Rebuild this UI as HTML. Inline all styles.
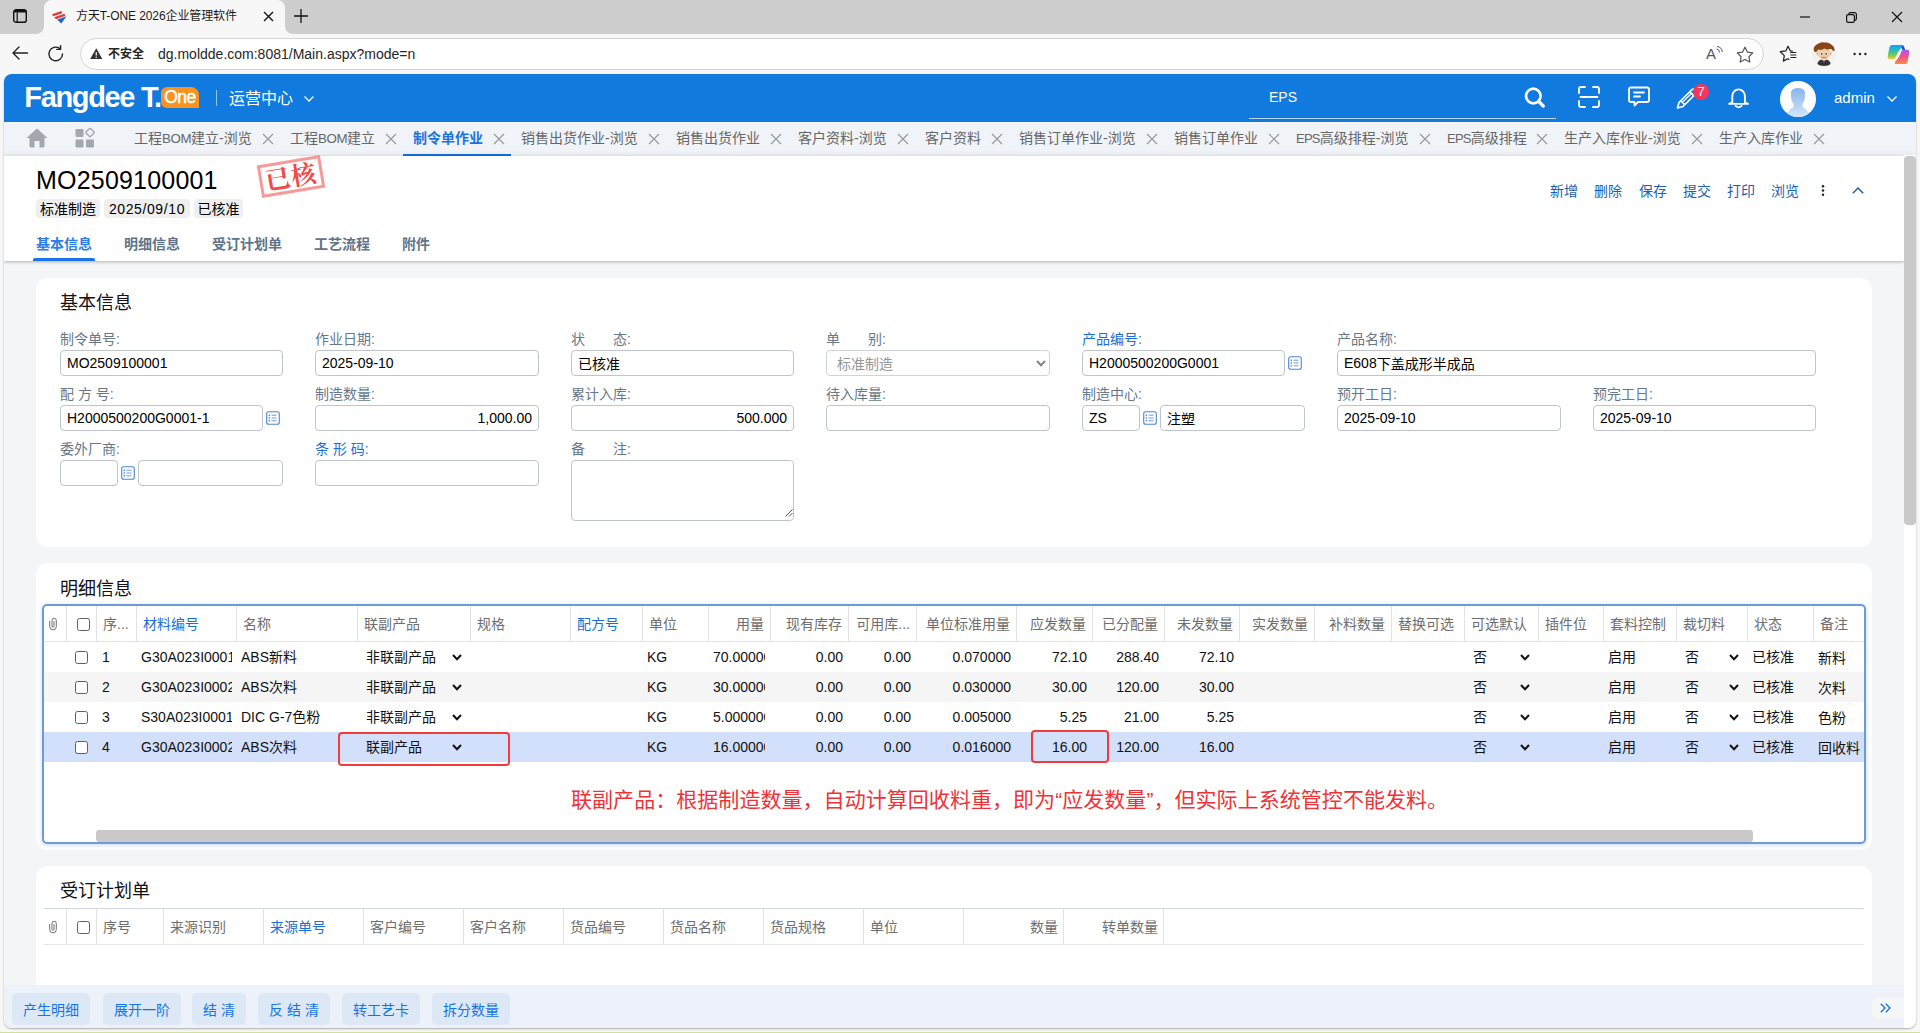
<!DOCTYPE html>
<html lang="zh-CN">
<head>
<meta charset="utf-8">
<title>方天T-ONE 2026企业管理软件</title>
<style>
*{box-sizing:border-box;margin:0;padding:0}
html,body{width:1920px;height:1033px;overflow:hidden;background:#f7f7f7}
body{font-family:"Liberation Sans","Noto Sans CJK SC",sans-serif;font-size:14px;color:#000;position:relative}
.abs{position:absolute}
svg{display:block;position:absolute;overflow:visible}
.nw{white-space:nowrap}
/* browser chrome */
#tabstrip{left:0;top:0;width:1920px;height:34px;background:#cdcdcd}
#acttab{left:44px;top:0;width:240.5px;height:34px;background:#f7f7f7;border-radius:8px 8px 0 0}
#acttab:before,#acttab:after{content:"";position:absolute;bottom:0;width:8px;height:8px}
#acttab:before{left:-8px;background:radial-gradient(circle at 0 0,rgba(247,247,247,0) 7.5px,#f7f7f7 8.5px)}
#acttab:after{right:-8px;background:radial-gradient(circle at 100% 0,rgba(247,247,247,0) 7.5px,#f7f7f7 8.5px)}
#tabtitle{left:76px;top:7px;font-size:12px;line-height:18px;color:#1b1b1b;letter-spacing:-0.1px}
#addr{left:0;top:34px;width:1920px;height:40px;background:#f7f7f7}
#pill{left:80px;top:38px;width:1684px;height:32px;background:#fff;border:1px solid #d4d4d4;border-radius:16px}
#unsafe{left:108px;top:45px;font-size:12px;line-height:18px;font-weight:bold;color:#262626}
#url{left:158px;top:44px;font-size:14px;line-height:20px;color:#262626}
#greenline{left:0;top:1032px;width:1920px;height:1px;background:#cfdf9c}
/* page */
#page{left:4px;top:74px;width:1912px;height:954px;background:#f4f5f7;border-radius:8px;overflow:hidden;box-shadow:0 1px 2px rgba(0,0,0,.3)}
#hdr{left:0;top:0;width:1912px;height:48px;background:#107ade}
#logo{left:20.300px;top:7px;font-size:29px;line-height:32px;font-weight:bold;color:#fff;letter-spacing:-1.340px}
#one{left:157px;top:13px;width:38px;height:21px;background:#f7931e;border-radius:6px 8px 0 6px;color:#fff;font-size:17.500px;line-height:21px;text-align:center;letter-spacing:-0.500px;-webkit-text-stroke:0.450px #fff}
#sep{left:212px;top:16px;width:1px;height:16px;background:rgba(255,255,255,.55)}
#center{left:225px;top:14px;font-size:16px;line-height:22px;color:#fff}
#eps{left:1265px;top:13px;font-size:14px;line-height:20px;color:#fff}
#sline{left:1245px;top:44px;width:307px;height:1px;background:rgba(255,255,255,.7)}
#badge{left:1689px;top:10px;width:16px;height:16px;border-radius:8px;background:#f5365c;color:#fff;font-size:13px;line-height:16px;text-align:center}
#avatar{left:1776px;top:7px;width:36px;height:36px;border-radius:18px;background:#fff;overflow:hidden}
#admin{left:1830px;top:13px;font-size:15px;line-height:22px;color:#fff}
#tabs{left:0;top:48px;width:1912px;height:34px;background:linear-gradient(#f0f3f7 0,#f0f3f7 28px,#e9ecef 34px)}
.tab{position:absolute;top:54px;font-size:14px;line-height:20px;color:#666;white-space:nowrap}
.tab.on{color:#1a73e0;font-weight:bold}
#tabline{left:399px;top:80px;width:108px;height:2px;background:#0f6fde}

#dochead{left:0;top:82px;width:1900px;height:105px;background:#fff;box-shadow:0 1px 3px rgba(0,0,0,.28)}
#docno{left:32px;top:90px;font-size:25px;line-height:32px;color:#000;letter-spacing:0.2px}
.tag{position:absolute;top:125px;height:19px;background:#efefef;border-radius:4px;font-size:14px;line-height:20px;text-align:center;color:#000;white-space:nowrap}
#stamp{left:255px;top:86px;width:64px;height:33px;border:3px solid rgba(243,70,70,.62);color:#f03030;font-family:"Noto Serif CJK SC","Liberation Serif",serif;font-weight:700;font-size:25px;line-height:24px;text-align:center;transform:rotate(-9.5deg);letter-spacing:1px;opacity:.88}
.act{position:absolute;top:107px;font-size:14px;line-height:20px;color:#1b5fae;white-space:nowrap}
.stab{position:absolute;top:160px;font-size:14px;line-height:20px;font-weight:bold;color:#5f7389;white-space:nowrap}
.stab.on{color:#2b7de9}
#stabline{left:29px;top:184px;width:62px;height:3px;background:#1a73e8;border-radius:2px 2px 0 0}
#vscroll{left:1900px;top:81px;width:12px;height:873px;background:#fff}
#vthumb{left:0;top:1px;width:12px;height:369px;background:#c9c9c9;border-radius:4px}
.card{position:absolute;left:32px;width:1836px;background:#fff;border-radius:12px}
.ctitle{position:absolute;left:56px;font-size:18px;line-height:24px;color:#111;white-space:nowrap}
.lbl{position:absolute;font-size:14px;line-height:16px;color:#66788a;white-space:nowrap}
.lbl.b{color:#1a6fd6}
.inp{position:absolute;height:26px;border:1px solid #c0c4cc;border-radius:4px;background:#fff;font-size:14px;line-height:24px;padding:0 6px;color:#000;white-space:nowrap;overflow:hidden}
.inp.r{text-align:right}
.inp.dis{color:#969696;padding-left:10px;border-color:#cfd3da}
.inp i{font-style:normal;position:relative;top:1px}

#grid{left:38px;top:530px;width:1824px;height:240px;border:2px solid #6e9ad8;border-radius:5px;background:#fff;box-shadow:0 1px 5px rgba(90,140,230,.35)}
.gh{position:absolute;font-size:14px;line-height:20px;color:#6e6e6e;white-space:nowrap;overflow:hidden}
.gh.b{color:#1a6fd6}
.gh.r{text-align:right}
.vs{position:absolute;width:1px;background:#e3e3e3}
.hl{position:absolute;height:1px;background:#e3e3e3}
.row{position:absolute;left:40px;width:1820px;height:30px}
.gc{position:absolute;font-size:14px;line-height:20px;color:#111;white-space:nowrap;overflow:hidden}
.gc.r{text-align:right}
.cb{position:absolute;width:13px;height:13px;border:1px solid #5f5f5f;border-radius:2.5px;background:#fff}
.rbox{position:absolute;border:2px solid #f23b3b;border-radius:4px}
#note{left:567px;top:712px;font-size:21px;line-height:28px;color:#ee3338;white-space:nowrap;letter-spacing:0.05px}
#hsb{left:92px;top:756px;width:1657px;height:12px;background:#c9c9c9;border-radius:3px}
#foot{left:0;top:911px;width:1900px;height:43px;background:#edf1f9}
.btn{position:absolute;top:919px;height:32px;background:#dce8f6;border-radius:5px;color:#1673e6;font-size:14px;line-height:34px;text-align:center;white-space:nowrap}
#more{left:1868px;top:924px;width:32px;height:20px;background:#f5f6f8;border-radius:5px 0 0 5px}
</style>
</head>
<body>

<div id="tabstrip" class="abs"></div>
<div id="acttab" class="abs"></div>
<svg style="left:13px;top:9px" width="14" height="14" viewBox="0 0 14 14"><rect x="0.700" y="0.700" width="12.600" height="12.600" rx="2.400" fill="none" stroke="#111" stroke-width="1.400"/><path d="M0.700 3.200Q0.700 0.700 3.200 0.700H10.800Q13.300 0.700 13.300 3.200V3.600H0.700Z" fill="#111"/><path d="M4.200 3.600V13.300" stroke="#111" stroke-width="1.200"/></svg>
<svg style="left:51px;top:9.500px" width="16.500" height="14.500" viewBox="0 0 16 14"><path d="M1 4L10 1L11 3L2 6Z" fill="#e03a3a"/><path d="M3 7L13 3.5L14 5.5L5 9Z" fill="#e03a3a"/><path d="M6 9.5L15 6L10 13Z" fill="#1c64c8"/></svg>
<div id="tabtitle" class="abs nw">方天T-ONE 2026企业管理软件</div>
<svg style="left:263.5px;top:11.5px" width="9.0" height="9.0" viewBox="0 0 9.0 9.0"><path d="M0 0L9.0 9.0M9.0 0L0 9.0" stroke="#111" stroke-width="1.4" fill="none"/></svg>
<svg style="left:294px;top:9px" width="14" height="14" viewBox="0 0 14 14"><path d="M7 0V14M0 7H14" stroke="#111" stroke-width="1.3"/></svg>
<svg style="left:1800px;top:16px" width="10" height="2" viewBox="0 0 10 2"><path d="M0 1H10" stroke="#111" stroke-width="1.2"/></svg>
<svg style="left:1846px;top:12px" width="11" height="11" viewBox="0 0 11 11"><rect x="0.6" y="2.6" width="7.8" height="7.8" rx="1.6" fill="none" stroke="#111" stroke-width="1.2"/><path d="M2.8 2.4V2.2A1.6 1.6 0 0 1 4.4 0.6H8.4A2 2 0 0 1 10.4 2.6V6.6A1.6 1.6 0 0 1 8.8 8.2H8.6" fill="none" stroke="#111" stroke-width="1.2"/></svg>
<svg style="left:1892px;top:12px" width="10" height="10" viewBox="0 0 10 10"><path d="M0 0L10 10M10 0L0 10" stroke="#111" stroke-width="1.2" fill="none"/></svg>
<div id="addr" class="abs"></div>
<svg style="left:12px;top:46px" width="16" height="14" viewBox="0 0 16 14"><path d="M7 1L1 7L7 13M1 7H15.5" fill="none" stroke="#222" stroke-width="1.4" stroke-linecap="round" stroke-linejoin="round"/></svg>
<svg style="left:47px;top:45px" width="18" height="18" viewBox="0 0 18 18"><path d="M15.5 9A6.8 6.8 0 1 1 12.6 3.4" fill="none" stroke="#222" stroke-width="1.4" stroke-linecap="round"/><path d="M9.2 3.6H13V-0.2" transform="translate(0.6,0.8)" fill="none" stroke="#222" stroke-width="1.4" stroke-linecap="round" stroke-linejoin="round"/></svg>
<div id="pill" class="abs"></div>
<svg style="left:90px;top:47.500px" width="12.500" height="11.500" viewBox="0 0 12 11"><path d="M6 0.3L11.8 10.6H0.2Z" fill="#333"/><path d="M6 4V7.2" stroke="#fff" stroke-width="1.2"/><circle cx="6" cy="8.8" r="0.7" fill="#fff"/></svg>
<div id="unsafe" class="abs nw">不安全</div>
<div id="url" class="abs nw">dg.moldde.com:8081/Main.aspx?mode=n</div>
<div class="abs nw" style="left:1706px;top:45px;font-size:15px;line-height:18px;color:#555">A</div>
<svg style="left:1716px;top:46px" width="7" height="9" viewBox="0 0 7 9"><path d="M0.5 3A3.5 3.5 0 0 1 3.5 6.5M1 0.5A6 6 0 0 1 6.3 6" fill="none" stroke="#555" stroke-width="1"/></svg>
<svg style="left:1736px;top:46px" width="18" height="17" viewBox="0 0 18 17"><path d="M9 1.2L11.4 6.1L16.8 6.9L12.9 10.7L13.8 16L9 13.5L4.2 16L5.1 10.7L1.2 6.9L6.6 6.1Z" fill="none" stroke="#555" stroke-width="1.2" stroke-linejoin="round"/></svg>
<svg style="left:1779px;top:45px" width="19" height="18" viewBox="0 0 19 18"><path d="M9 1.300L11.200 5.800L13.300 6.100M9 1.300L6.800 5.900L1.300 6.700L5.300 10.600L4.400 16.100L8.700 13.800L9.900 14.400" fill="none" stroke="#222" stroke-width="1.250" stroke-linejoin="round" stroke-linecap="round"/><path d="M11.300 7.500H17.300M11.300 10H17.300M11.300 12.500H17.300" stroke="#222" stroke-width="1.200"/></svg>
<svg style="left:1812px;top:42px;overflow:hidden;border-radius:12px" width="24" height="24" viewBox="0 0 24 24"><circle cx="12" cy="12" r="12" fill="#f1f2ef"/><path d="M5 24Q5.500 18.200 9.500 17.600L12 19L14.500 17.600Q18.500 18.200 19 24Z" fill="#34353a"/><path d="M11.300 18.600L12 21L12.700 18.600Z" fill="#e4573d"/><ellipse cx="5.600" cy="11.600" rx="1.300" ry="1.800" fill="#e9b48c"/><ellipse cx="18.400" cy="11.600" rx="1.300" ry="1.800" fill="#e9b48c"/><ellipse cx="12" cy="11.400" rx="5.900" ry="6.400" fill="#f3c9a4"/><path d="M1.800 8.600Q0.800 3.200 6 1.600Q9 -0.800 12.200 0.600Q16.500 -0.800 19.800 2.200Q23.600 4.800 22.200 9.400Q20.400 8.600 19 6.800Q15.500 8.400 12.400 6.600Q9.600 8.600 6.400 7.600Q5.200 9.600 3.400 10.200Q2.300 9.800 1.800 8.600Z" fill="#8a4418"/><ellipse cx="9.600" cy="11.600" rx="1.300" ry="1.700" fill="#fff"/><ellipse cx="14.400" cy="11.600" rx="1.300" ry="1.700" fill="#fff"/><circle cx="9.700" cy="11.800" r="0.850" fill="#222"/><circle cx="14.300" cy="11.800" r="0.850" fill="#222"/><path d="M9.800 15Q12 16.600 14.200 15" stroke="#9c4a32" stroke-width="0.700" fill="none"/></svg>
<svg style="left:1853px;top:52px" width="14" height="4" viewBox="0 0 14 4"><circle cx="1.6" cy="2" r="1.2" fill="#222"/><circle cx="7" cy="2" r="1.2" fill="#222"/><circle cx="12.4" cy="2" r="1.2" fill="#222"/></svg>
<svg style="left:1886.500px;top:43.500px" width="23" height="21" viewBox="0 0 24 21.500"><defs><linearGradient id="cp1" x1="0" y1="0" x2="0" y2="1"><stop offset="0" stop-color="#1e9af2"/><stop offset=".35" stop-color="#27b8c8"/><stop offset=".6" stop-color="#55c96a"/><stop offset="1" stop-color="#f6c72e"/></linearGradient><linearGradient id="cp2" x1="0" y1="0" x2="0" y2="1"><stop offset="0" stop-color="#a65be8"/><stop offset=".45" stop-color="#ee4f93"/><stop offset="1" stop-color="#fb8b3a"/></linearGradient></defs><path d="M12.500 0.800H15.200Q17.400 0.800 18 2.800L19 6H16.200L14.600 3Z" fill="#1b55d6"/><path d="M4.600 0.800H14Q16.600 0.800 15.600 3L11.600 8.200L8.700 14.300Q8 15.700 6.400 15.700H3.200Q0 15.700 0.800 12.100L2.600 3.500Q3.200 0.800 4.600 0.800Z" fill="url(#cp1)"/><path d="M19.400 20.700H10Q7.400 20.700 8.400 18.500L12.400 13.300L15.300 7.200Q16 5.800 17.600 5.800H20.800Q24 5.800 23.200 9.400L21.400 18Q20.800 20.700 19.400 20.700Z" fill="url(#cp2)"/></svg>
<div id="greenline" class="abs"></div>

<div id="page" class="abs">

<div id="hdr" class="abs"></div>
<div id="logo" class="abs nw">Fangdee T.</div>
<div id="one" class="abs nw">One</div>
<div id="sep" class="abs"></div>
<div id="center" class="abs nw">运营中心</div>
<svg style="left:300px;top:22px" width="10" height="6" viewBox="0 0 10 6"><path d="M0.5 0.5L5 5L9.5 0.5" fill="none" stroke="#fff" stroke-width="1.3"/></svg>
<div id="eps" class="abs nw">EPS</div>
<div id="sline" class="abs"></div>
<svg style="left:1520px;top:13px" width="22" height="22" viewBox="0 0 22 22"><circle cx="9.300" cy="9" r="7.300" fill="none" stroke="#fff" stroke-width="2.700"/><path d="M14.800 14.500L19.300 19" stroke="#fff" stroke-width="3.200" stroke-linecap="round"/></svg>
<svg style="left:1574px;top:12px" width="22" height="22" viewBox="0 0 22 22"><path d="M1 7V3Q1 1 3 1H7M15 1H19Q21 1 21 3V7M21 15V19Q21 21 19 21H15M7 21H3Q1 21 1 19V15M2.500 11H19.500" fill="none" stroke="#fff" stroke-width="1.8" stroke-linecap="round"/></svg>
<svg style="left:1624px;top:12px" width="22" height="22" viewBox="0 0 22 22"><path d="M3 1.5H19Q21 1.5 21 3.5V14Q21 16 19 16H10L6.5 19.5V16H3Q1 16 1 14V3.5Q1 1.5 3 1.5Z" fill="none" stroke="#fff" stroke-width="1.8" stroke-linejoin="round"/><path d="M6 6.5H16M6 10.5H12" stroke="#fff" stroke-width="1.8" stroke-linecap="round"/></svg>
<svg style="left:1672px;top:12px" width="24" height="24" viewBox="0 0 24 24"><path d="M3 16.5L15.5 4Q17.5 2 19.5 4Q21.5 6 19.5 8L7 20.5L1.5 22Z M5 15L8.8 18.8 M13.8 5.8L17.7 9.7" fill="none" stroke="#fff" stroke-width="1.7" stroke-linejoin="round"/><path d="M6 16.8L16 6.8" stroke="#fff" stroke-width="1.3"/></svg>
<div id="badge" class="abs">7</div>
<svg style="left:1724px;top:11px" width="22" height="24" viewBox="0 0 22 24"><path d="M4.300 17.300V11A6.300 6.600 0 0 1 16.900 11V17.300L20 18.900H1.200Z" fill="none" stroke="#fff" stroke-width="1.900" stroke-linejoin="round"/><path d="M7.600 20.900Q10.600 23.800 13.600 20.900" fill="none" stroke="#fff" stroke-width="1.800" stroke-linecap="round"/></svg>
<div id="avatar" class="abs"><svg style="left:0;top:0" width="36" height="36" viewBox="0 0 36 36"><defs><linearGradient id="av" x1="0" y1="0" x2="0" y2="1"><stop offset="0" stop-color="#86b4ea"/><stop offset="1" stop-color="#d4e6f9"/></linearGradient></defs><path d="M11 14Q10 7 18 7Q26 7 25 14Q25 20 22.5 23V26Q28 28 29 36H7Q8 28 13.500 26V23Q11 20 11 14Z" fill="url(#av)"/></svg></div>
<div id="admin" class="abs nw">admin</div>
<svg style="left:1883px;top:22px" width="10" height="6" viewBox="0 0 10 6"><path d="M0.5 0.5L5 5L9.5 0.5" fill="none" stroke="#fff" stroke-width="1.3"/></svg>
<div id="tabs" class="abs"></div>
<svg style="left:22px;top:54px" width="22" height="20" viewBox="0 0 22 20"><path d="M11 0.5L21.5 10H18.500V18Q18.500 19.500 17 19.500H13.500V13H8.500V19.500H5Q3.500 19.500 3.500 18V10H0.500Z" fill="#a3a7ae"/></svg>
<svg style="left:71px;top:53px" width="22" height="21" viewBox="0 0 22 21"><rect x="0.5" y="2" width="8" height="8" rx="1.2" fill="#a3a7ae"/><rect x="0.5" y="12.500" width="8" height="8" rx="1.2" fill="#a3a7ae"/><rect x="11" y="12.500" width="8" height="8" rx="1.2" fill="#a3a7ae"/><rect x="11.800" y="2.300" width="6.400" height="6.400" rx="1" transform="rotate(45 15 5.500)" fill="none" stroke="#a3a7ae" stroke-width="1.400"/></svg>
<div class="tab" style="left:130px">工程<span style="font-size:13.300px;letter-spacing:-0.400px">BOM</span>建立-浏览</div><svg style="left:259px;top:59.5px" width="10" height="10" viewBox="0 0 10 10"><path d="M0 0L10 10M10 0L0 10" stroke="#999" stroke-width="1.2" fill="none"/></svg><div class="tab" style="left:286px">工程<span style="font-size:13.300px;letter-spacing:-0.400px">BOM</span>建立</div><svg style="left:382px;top:59.5px" width="10" height="10" viewBox="0 0 10 10"><path d="M0 0L10 10M10 0L0 10" stroke="#999" stroke-width="1.2" fill="none"/></svg><div class="tab on" style="left:409px">制令单作业</div><svg style="left:490px;top:59.5px" width="10" height="10" viewBox="0 0 10 10"><path d="M0 0L10 10M10 0L0 10" stroke="#999" stroke-width="1.2" fill="none"/></svg><div class="tab" style="left:517px">销售出货作业-浏览</div><svg style="left:645px;top:59.5px" width="10" height="10" viewBox="0 0 10 10"><path d="M0 0L10 10M10 0L0 10" stroke="#999" stroke-width="1.2" fill="none"/></svg><div class="tab" style="left:672px">销售出货作业</div><svg style="left:767px;top:59.5px" width="10" height="10" viewBox="0 0 10 10"><path d="M0 0L10 10M10 0L0 10" stroke="#999" stroke-width="1.2" fill="none"/></svg><div class="tab" style="left:794px">客户资料-浏览</div><svg style="left:894px;top:59.5px" width="10" height="10" viewBox="0 0 10 10"><path d="M0 0L10 10M10 0L0 10" stroke="#999" stroke-width="1.2" fill="none"/></svg><div class="tab" style="left:921px">客户资料</div><svg style="left:988px;top:59.5px" width="10" height="10" viewBox="0 0 10 10"><path d="M0 0L10 10M10 0L0 10" stroke="#999" stroke-width="1.2" fill="none"/></svg><div class="tab" style="left:1015px">销售订单作业-浏览</div><svg style="left:1143px;top:59.5px" width="10" height="10" viewBox="0 0 10 10"><path d="M0 0L10 10M10 0L0 10" stroke="#999" stroke-width="1.2" fill="none"/></svg><div class="tab" style="left:1170px">销售订单作业</div><svg style="left:1265px;top:59.5px" width="10" height="10" viewBox="0 0 10 10"><path d="M0 0L10 10M10 0L0 10" stroke="#999" stroke-width="1.2" fill="none"/></svg><div class="tab" style="left:1292px"><span style="font-size:13px;letter-spacing:-0.750px">EPS</span>高级排程-浏览</div><svg style="left:1416px;top:59.5px" width="10" height="10" viewBox="0 0 10 10"><path d="M0 0L10 10M10 0L0 10" stroke="#999" stroke-width="1.2" fill="none"/></svg><div class="tab" style="left:1443px"><span style="font-size:13px;letter-spacing:-0.750px">EPS</span>高级排程</div><svg style="left:1533px;top:59.5px" width="10" height="10" viewBox="0 0 10 10"><path d="M0 0L10 10M10 0L0 10" stroke="#999" stroke-width="1.2" fill="none"/></svg><div class="tab" style="left:1560px">生产入库作业-浏览</div><svg style="left:1688px;top:59.5px" width="10" height="10" viewBox="0 0 10 10"><path d="M0 0L10 10M10 0L0 10" stroke="#999" stroke-width="1.2" fill="none"/></svg><div class="tab" style="left:1715px">生产入库作业</div><svg style="left:1810px;top:59.5px" width="10" height="10" viewBox="0 0 10 10"><path d="M0 0L10 10M10 0L0 10" stroke="#999" stroke-width="1.2" fill="none"/></svg>
<div id="tabline" class="abs"></div>


<div class="card" style="top:204px;height:269px"></div>
<div class="ctitle" style="top:217px">基本信息</div>
<div class="lbl" style="left:56px;top:257px">制令单号:</div><div class="inp " style="left:56px;top:276px;width:223px;height:26px">MO2509100001</div><div class="lbl" style="left:311px;top:257px">作业日期:</div><div class="inp " style="left:311px;top:276px;width:224px;height:26px">2025-09-10</div><div class="lbl" style="left:567px;top:257px">状&emsp;&emsp;态:</div><div class="inp " style="left:567px;top:276px;width:223px;height:26px"><i>已核准</i></div><div class="lbl" style="left:822px;top:257px">单&emsp;&emsp;别:</div><div class="inp dis" style="left:822px;top:276px;width:224px;height:26px"><i>标准制造</i></div><svg style="left:1032px;top:286px" width="10" height="7" viewBox="0 0 10 7"><path d="M1 1L5 5.200L9 1" fill="none" stroke="#858585" stroke-width="2"/></svg><div class="lbl b" style="left:1078px;top:257px">产品编号:</div><div class="inp " style="left:1078px;top:276px;width:203px;height:26px">H2000500200G0001</div><svg style="left:1284px;top:282px" width="14" height="14" viewBox="0 0 14 14"><rect x="0.7" y="0.7" width="12.6" height="12.6" rx="2" fill="#fff" stroke="#4a86d8" stroke-width="1.1"/><path d="M3.300 3.500V10.500" stroke="#4a86d8" stroke-width="1.300" stroke-dasharray="1.400 1.400"/><path d="M5.500 4.200H10.500M5.500 7H10.500M5.500 9.800H10.500" stroke="#6b9be0" stroke-width="1"/></svg><div class="lbl" style="left:1333px;top:257px">产品名称:</div><div class="inp " style="left:1333px;top:276px;width:479px;height:26px">E608<i>下盖成形半成品</i></div><div class="lbl" style="left:56px;top:312px">配 方 号:</div><div class="inp " style="left:56px;top:331px;width:203px;height:26px">H2000500200G0001-1</div><svg style="left:262px;top:337px" width="14" height="14" viewBox="0 0 14 14"><rect x="0.7" y="0.7" width="12.6" height="12.6" rx="2" fill="#fff" stroke="#4a86d8" stroke-width="1.1"/><path d="M3.300 3.500V10.500" stroke="#4a86d8" stroke-width="1.300" stroke-dasharray="1.400 1.400"/><path d="M5.500 4.200H10.500M5.500 7H10.500M5.500 9.800H10.500" stroke="#6b9be0" stroke-width="1"/></svg><div class="lbl" style="left:311px;top:312px">制造数量:</div><div class="inp r" style="left:311px;top:331px;width:224px;height:26px">1,000.00</div><div class="lbl" style="left:567px;top:312px">累计入库:</div><div class="inp r" style="left:567px;top:331px;width:223px;height:26px">500.000</div><div class="lbl" style="left:822px;top:312px">待入库量:</div><div class="inp " style="left:822px;top:331px;width:224px;height:26px"></div><div class="lbl" style="left:1078px;top:312px">制造中心:</div><div class="inp " style="left:1078px;top:331px;width:58px;height:26px">ZS</div><svg style="left:1139px;top:337px" width="14" height="14" viewBox="0 0 14 14"><rect x="0.7" y="0.7" width="12.6" height="12.6" rx="2" fill="#fff" stroke="#4a86d8" stroke-width="1.1"/><path d="M3.300 3.500V10.500" stroke="#4a86d8" stroke-width="1.300" stroke-dasharray="1.400 1.400"/><path d="M5.500 4.200H10.500M5.500 7H10.500M5.500 9.800H10.500" stroke="#6b9be0" stroke-width="1"/></svg><div class="inp " style="left:1156px;top:331px;width:145px;height:26px"><i>注塑</i></div><div class="lbl" style="left:1333px;top:312px">预开工日:</div><div class="inp " style="left:1333px;top:331px;width:224px;height:26px">2025-09-10</div><div class="lbl" style="left:1589px;top:312px">预完工日:</div><div class="inp " style="left:1589px;top:331px;width:223px;height:26px">2025-09-10</div><div class="lbl" style="left:56px;top:367px">委外厂商:</div><div class="inp " style="left:56px;top:386px;width:58px;height:26px"></div><svg style="left:117px;top:392px" width="14" height="14" viewBox="0 0 14 14"><rect x="0.7" y="0.7" width="12.6" height="12.6" rx="2" fill="#fff" stroke="#4a86d8" stroke-width="1.1"/><path d="M3.300 3.500V10.500" stroke="#4a86d8" stroke-width="1.300" stroke-dasharray="1.400 1.400"/><path d="M5.500 4.200H10.500M5.500 7H10.500M5.500 9.800H10.500" stroke="#6b9be0" stroke-width="1"/></svg><div class="inp " style="left:134px;top:386px;width:145px;height:26px"></div><div class="lbl b" style="left:311px;top:367px">条 形 码:</div><div class="inp " style="left:311px;top:386px;width:224px;height:26px"></div><div class="lbl" style="left:567px;top:367px">备&emsp;&emsp;注:</div><div class="inp " style="left:567px;top:386px;width:223px;height:61px"></div><svg style="left:781px;top:435px" width="8" height="8" viewBox="0 0 8 8"><path d="M7.500 0.500L0.500 7.500M7.500 4L4 7.500" stroke="#555" stroke-width="1"/></svg>

<div class="card" style="top:489px;height:287px"></div><div class="ctitle" style="top:503px">明细信息</div><div id="grid" class="abs"></div><div class="row" style="top:598px;background:#f5f5f5"></div><div class="row" style="top:658px;background:#d3e0fc"></div><svg style="left:45px;top:543px" width="8" height="14" viewBox="0 0 8 14"><path d="M0.700 4.400V9.600A3.300 3.300 0 0 0 7.300 9.600V3.400A2.150 2.150 0 0 0 3 3.400V9.300A1 1 0 0 0 5 9.300V4.600" fill="none" stroke="#6a6a6a" stroke-width="0.950" stroke-linecap="round"/></svg><div class="vs" style="left:62px;top:532px;height:36px"></div><div class="cb" style="left:73px;top:544px"></div><div class="vs" style="left:92px;top:532px;height:36px"></div><div class="gh" style="left:99px;top:540px;width:28px">序...</div><div class="vs" style="left:132px;top:532px;height:36px"></div><div class="gh b" style="left:139px;top:540px;width:88px">材料编号</div><div class="vs" style="left:232px;top:532px;height:36px"></div><div class="gh" style="left:239px;top:540px;width:109px">名称</div><div class="vs" style="left:353px;top:532px;height:36px"></div><div class="gh" style="left:360px;top:540px;width:101px">联副产品</div><div class="vs" style="left:466px;top:532px;height:36px"></div><div class="gh" style="left:473px;top:540px;width:88px">规格</div><div class="vs" style="left:566px;top:532px;height:36px"></div><div class="gh b" style="left:573px;top:540px;width:60px">配方号</div><div class="vs" style="left:638px;top:532px;height:36px"></div><div class="gh" style="left:645px;top:540px;width:54px">单位</div><div class="vs" style="left:704px;top:532px;height:36px"></div><div class="gh r" style="left:711px;top:540px;width:49px">用量</div><div class="vs" style="left:766px;top:532px;height:36px"></div><div class="gh r" style="left:773px;top:540px;width:65px">现有库存</div><div class="vs" style="left:844px;top:532px;height:36px"></div><div class="gh r" style="left:851px;top:540px;width:55px">可用库...</div><div class="vs" style="left:912px;top:532px;height:36px"></div><div class="gh r" style="left:919px;top:540px;width:87px">单位标准用量</div><div class="vs" style="left:1012px;top:532px;height:36px"></div><div class="gh r" style="left:1019px;top:540px;width:63px">应发数量</div><div class="vs" style="left:1088px;top:532px;height:36px"></div><div class="gh r" style="left:1095px;top:540px;width:59px">已分配量</div><div class="vs" style="left:1160px;top:532px;height:36px"></div><div class="gh r" style="left:1167px;top:540px;width:62px">未发数量</div><div class="vs" style="left:1235px;top:532px;height:36px"></div><div class="gh r" style="left:1242px;top:540px;width:62px">实发数量</div><div class="vs" style="left:1310px;top:532px;height:36px"></div><div class="gh r" style="left:1317px;top:540px;width:64px">补料数量</div><div class="vs" style="left:1387px;top:532px;height:36px"></div><div class="gh" style="left:1394px;top:540px;width:61px">替换可选</div><div class="vs" style="left:1460px;top:532px;height:36px"></div><div class="gh" style="left:1467px;top:540px;width:62px">可选默认</div><div class="vs" style="left:1534px;top:532px;height:36px"></div><div class="gh" style="left:1541px;top:540px;width:53px">插件位</div><div class="vs" style="left:1599px;top:532px;height:36px"></div><div class="gh" style="left:1606px;top:540px;width:61px">套料控制</div><div class="vs" style="left:1672px;top:532px;height:36px"></div><div class="gh" style="left:1679px;top:540px;width:59px">裁切料</div><div class="vs" style="left:1743px;top:532px;height:36px"></div><div class="gh" style="left:1750px;top:540px;width:54px">状态</div><div class="vs" style="left:1809px;top:532px;height:36px"></div><div class="gh" style="left:1816px;top:540px;width:39px">备注</div><div class="hl" style="left:40px;top:567px;width:1820px"></div><div class="cb" style="left:71px;top:577px"></div><div class="gc" style="left:98px;top:573px;width:32px">1</div><div class="gc" style="left:137px;top:573px;width:91px">G30A023I0001</div><div class="gc" style="left:237px;top:573px;width:114px">ABS新料</div><div class="gc" style="left:362px;top:573px;width:84px">非联副产品</div><svg style="left:448px;top:580px" width="10" height="7" viewBox="0 0 10 7"><path d="M1 1L5 5.200L9 1" fill="none" stroke="#111" stroke-width="2"/></svg><div class="gc" style="left:643px;top:573px;width:53px">KG</div><div class="gc" style="left:709px;top:573px;width:52px">70.00000</div><div class="gc r" style="left:776px;top:573px;width:63px">0.00</div><div class="gc r" style="left:846px;top:573px;width:61px">0.00</div><div class="gc r" style="left:916px;top:573px;width:91px">0.070000</div><div class="gc r" style="left:1016px;top:573px;width:67px">72.10</div><div class="gc r" style="left:1091px;top:573px;width:64px">288.40</div><div class="gc r" style="left:1166px;top:573px;width:64px">72.10</div><div class="gc" style="left:1469px;top:573px;width:27px">否</div><svg style="left:1516px;top:580px" width="10" height="7" viewBox="0 0 10 7"><path d="M1 1L5 5.200L9 1" fill="none" stroke="#111" stroke-width="2"/></svg><div class="gc" style="left:1604px;top:573px;width:52px">启用</div><div class="gc" style="left:1681px;top:573px;width:25px">否</div><svg style="left:1725px;top:580px" width="10" height="7" viewBox="0 0 10 7"><path d="M1 1L5 5.200L9 1" fill="none" stroke="#111" stroke-width="2"/></svg><div class="gc" style="left:1748px;top:573px;width:60px">已核准</div><div class="gc" style="left:1814px;top:574px;width:44px">新料</div><div class="cb" style="left:71px;top:607px"></div><div class="gc" style="left:98px;top:603px;width:32px">2</div><div class="gc" style="left:137px;top:603px;width:91px">G30A023I0002</div><div class="gc" style="left:237px;top:603px;width:114px">ABS次料</div><div class="gc" style="left:362px;top:603px;width:84px">非联副产品</div><svg style="left:448px;top:610px" width="10" height="7" viewBox="0 0 10 7"><path d="M1 1L5 5.200L9 1" fill="none" stroke="#111" stroke-width="2"/></svg><div class="gc" style="left:643px;top:603px;width:53px">KG</div><div class="gc" style="left:709px;top:603px;width:52px">30.00000</div><div class="gc r" style="left:776px;top:603px;width:63px">0.00</div><div class="gc r" style="left:846px;top:603px;width:61px">0.00</div><div class="gc r" style="left:916px;top:603px;width:91px">0.030000</div><div class="gc r" style="left:1016px;top:603px;width:67px">30.00</div><div class="gc r" style="left:1091px;top:603px;width:64px">120.00</div><div class="gc r" style="left:1166px;top:603px;width:64px">30.00</div><div class="gc" style="left:1469px;top:603px;width:27px">否</div><svg style="left:1516px;top:610px" width="10" height="7" viewBox="0 0 10 7"><path d="M1 1L5 5.200L9 1" fill="none" stroke="#111" stroke-width="2"/></svg><div class="gc" style="left:1604px;top:603px;width:52px">启用</div><div class="gc" style="left:1681px;top:603px;width:25px">否</div><svg style="left:1725px;top:610px" width="10" height="7" viewBox="0 0 10 7"><path d="M1 1L5 5.200L9 1" fill="none" stroke="#111" stroke-width="2"/></svg><div class="gc" style="left:1748px;top:603px;width:60px">已核准</div><div class="gc" style="left:1814px;top:604px;width:44px">次料</div><div class="cb" style="left:71px;top:637px"></div><div class="gc" style="left:98px;top:633px;width:32px">3</div><div class="gc" style="left:137px;top:633px;width:91px">S30A023I0001</div><div class="gc" style="left:237px;top:633px;width:114px">DIC G-7色粉</div><div class="gc" style="left:362px;top:633px;width:84px">非联副产品</div><svg style="left:448px;top:640px" width="10" height="7" viewBox="0 0 10 7"><path d="M1 1L5 5.200L9 1" fill="none" stroke="#111" stroke-width="2"/></svg><div class="gc" style="left:643px;top:633px;width:53px">KG</div><div class="gc" style="left:709px;top:633px;width:52px">5.000000</div><div class="gc r" style="left:776px;top:633px;width:63px">0.00</div><div class="gc r" style="left:846px;top:633px;width:61px">0.00</div><div class="gc r" style="left:916px;top:633px;width:91px">0.005000</div><div class="gc r" style="left:1016px;top:633px;width:67px">5.25</div><div class="gc r" style="left:1091px;top:633px;width:64px">21.00</div><div class="gc r" style="left:1166px;top:633px;width:64px">5.25</div><div class="gc" style="left:1469px;top:633px;width:27px">否</div><svg style="left:1516px;top:640px" width="10" height="7" viewBox="0 0 10 7"><path d="M1 1L5 5.200L9 1" fill="none" stroke="#111" stroke-width="2"/></svg><div class="gc" style="left:1604px;top:633px;width:52px">启用</div><div class="gc" style="left:1681px;top:633px;width:25px">否</div><svg style="left:1725px;top:640px" width="10" height="7" viewBox="0 0 10 7"><path d="M1 1L5 5.200L9 1" fill="none" stroke="#111" stroke-width="2"/></svg><div class="gc" style="left:1748px;top:633px;width:60px">已核准</div><div class="gc" style="left:1814px;top:634px;width:44px">色粉</div><div class="cb" style="left:71px;top:667px"></div><div class="gc" style="left:98px;top:663px;width:32px">4</div><div class="gc" style="left:137px;top:663px;width:91px">G30A023I0002</div><div class="gc" style="left:237px;top:663px;width:114px">ABS次料</div><div class="gc" style="left:362px;top:663px;width:84px">联副产品</div><svg style="left:448px;top:670px" width="10" height="7" viewBox="0 0 10 7"><path d="M1 1L5 5.200L9 1" fill="none" stroke="#111" stroke-width="2"/></svg><div class="gc" style="left:643px;top:663px;width:53px">KG</div><div class="gc" style="left:709px;top:663px;width:52px">16.00000</div><div class="gc r" style="left:776px;top:663px;width:63px">0.00</div><div class="gc r" style="left:846px;top:663px;width:61px">0.00</div><div class="gc r" style="left:916px;top:663px;width:91px">0.016000</div><div class="gc r" style="left:1016px;top:663px;width:67px">16.00</div><div class="gc r" style="left:1091px;top:663px;width:64px">120.00</div><div class="gc r" style="left:1166px;top:663px;width:64px">16.00</div><div class="gc" style="left:1469px;top:663px;width:27px">否</div><svg style="left:1516px;top:670px" width="10" height="7" viewBox="0 0 10 7"><path d="M1 1L5 5.200L9 1" fill="none" stroke="#111" stroke-width="2"/></svg><div class="gc" style="left:1604px;top:663px;width:52px">启用</div><div class="gc" style="left:1681px;top:663px;width:25px">否</div><svg style="left:1725px;top:670px" width="10" height="7" viewBox="0 0 10 7"><path d="M1 1L5 5.200L9 1" fill="none" stroke="#111" stroke-width="2"/></svg><div class="gc" style="left:1748px;top:663px;width:60px">已核准</div><div class="gc" style="left:1814px;top:664px;width:44px">回收料</div><div class="rbox" style="left:334px;top:658px;width:172px;height:34px"></div><div class="rbox" style="left:1027px;top:656px;width:78px;height:33px"></div><div id="note" class="abs">联副产品：根据制造数量，自动计算回收料重，即为“应发数量”，但实际上系统管控不能发料。</div><div id="hsb" class="abs"></div><div class="card" style="top:792px;height:200px"></div><div class="ctitle" style="top:805px">受订计划单</div><div class="hl" style="left:40px;top:834px;width:1820px;background:#d0d7e3"></div><div class="hl" style="left:40px;top:870px;width:1820px;background:#e6e6e6"></div><svg style="left:45px;top:846px" width="8" height="14" viewBox="0 0 8 14"><path d="M0.700 4.400V9.600A3.300 3.300 0 0 0 7.300 9.600V3.400A2.150 2.150 0 0 0 3 3.400V9.300A1 1 0 0 0 5 9.300V4.600" fill="none" stroke="#6a6a6a" stroke-width="0.950" stroke-linecap="round"/></svg><div class="vs" style="left:62px;top:835px;height:35px"></div><div class="cb" style="left:73px;top:847px"></div><div class="vs" style="left:92px;top:835px;height:35px"></div><div class="gh" style="left:99px;top:843px;width:55px">序号</div><div class="vs" style="left:159px;top:835px;height:35px"></div><div class="gh" style="left:166px;top:843px;width:88px">来源识别</div><div class="vs" style="left:259px;top:835px;height:35px"></div><div class="gh b" style="left:266px;top:843px;width:88px">来源单号</div><div class="vs" style="left:359px;top:835px;height:35px"></div><div class="gh" style="left:366px;top:843px;width:88px">客户编号</div><div class="vs" style="left:459px;top:835px;height:35px"></div><div class="gh" style="left:466px;top:843px;width:88px">客户名称</div><div class="vs" style="left:559px;top:835px;height:35px"></div><div class="gh" style="left:566px;top:843px;width:88px">货品编号</div><div class="vs" style="left:659px;top:835px;height:35px"></div><div class="gh" style="left:666px;top:843px;width:88px">货品名称</div><div class="vs" style="left:759px;top:835px;height:35px"></div><div class="gh" style="left:766px;top:843px;width:88px">货品规格</div><div class="vs" style="left:859px;top:835px;height:35px"></div><div class="gh" style="left:866px;top:843px;width:88px">单位</div><div class="vs" style="left:959px;top:835px;height:35px"></div><div class="gh r" style="left:966px;top:843px;width:88px">数量</div><div class="vs" style="left:1059px;top:835px;height:35px"></div><div class="gh r" style="left:1066px;top:843px;width:88px">转单数量</div><div class="vs" style="left:1159px;top:835px;height:35px"></div>
<div id="dochead" class="abs"></div>
<div id="docno" class="abs nw">MO2509100001</div>
<div class="tag" style="left:32px;width:64px">标准制造</div>
<div class="tag" style="left:100px;width:86px;letter-spacing:0.6px">2025/09/10</div>
<div class="tag" style="left:190px;width:49px">已核准</div>
<div id="stamp" class="abs nw">已核</div>
<div class="act" style="left:1546px">新增</div>
<div class="act" style="left:1590px">删除</div>
<div class="act" style="left:1635px">保存</div>
<div class="act" style="left:1679px">提交</div>
<div class="act" style="left:1723px">打印</div>
<div class="act" style="left:1767px">浏览</div>
<svg style="left:1817px;top:111px" width="4" height="11" viewBox="0 0 4 11"><circle cx="2" cy="1.3" r="1.200" fill="#123"/><circle cx="2" cy="5.500" r="1.200" fill="#123"/><circle cx="2" cy="9.700" r="1.200" fill="#123"/></svg>
<svg style="left:1848px;top:113px" width="12" height="7" viewBox="0 0 12 7"><path d="M0.800 6.200L6 1L11.200 6.200" fill="none" stroke="#1b5fae" stroke-width="1.500"/></svg>
<div class="stab on" style="left:32px">基本信息</div>
<div class="stab" style="left:120px">明细信息</div>
<div class="stab" style="left:208px">受订计划单</div>
<div class="stab" style="left:310px">工艺流程</div>
<div class="stab" style="left:398px">附件</div>
<div id="stabline" class="abs"></div>
<div id="foot" class="abs"></div><div class="btn" style="left:8px;width:78px">产生明细</div><div class="btn" style="left:99px;width:78px">展开一阶</div><div class="btn" style="left:188px;width:54px">结 清</div><div class="btn" style="left:254px;width:72px">反 结 清</div><div class="btn" style="left:338px;width:78px">转工艺卡</div><div class="btn" style="left:428px;width:78px">拆分数量</div><div id="more" class="abs"></div><svg style="left:1876px;top:929px" width="11" height="10" viewBox="0 0 11 10"><path d="M0.800 0.800L5 5L0.800 9.200M5.800 0.800L10 5L5.800 9.200" fill="none" stroke="#0d6be0" stroke-width="1.250"/></svg><div id="vscroll" class="abs"><div id="vthumb" class="abs"></div></div>
</div>
</body>
</html>
